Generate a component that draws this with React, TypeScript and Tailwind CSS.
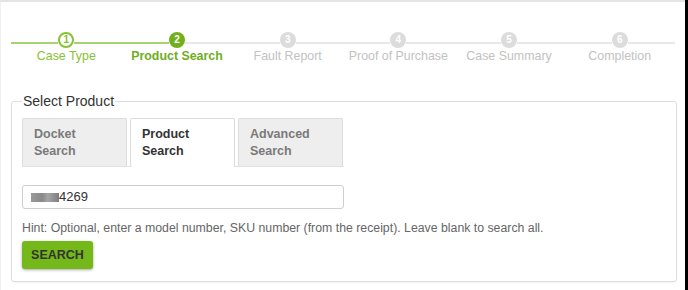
import React from 'react';

const steps = ['Case Type', 'Product Search', 'Fault Report', 'Proof of Purchase', 'Case Summary', 'Completion'];

const Stepper = () => {
  const current = 1;
  return (
    <div className="flex px-[10px] pt-[30px]">
      {steps.map((label, i) => {
        const done = i < current;
        const active = i === current;
        const leftGreen = i <= current;
        const rightGreen = i < current;
        return (
          <div key={label} className="flex-1 flex flex-col items-center">
            <div className="flex items-start w-full">
              <div className={`flex-1 mt-[10px] h-[2px] ${leftGreen ? 'bg-[#a6d46c]' : 'bg-[#e8e8e8]'}`} />
              {done ? (
                <div className="w-4 h-4 rounded-full border-2 border-[#86c232] bg-white flex items-center justify-center text-[10px] font-bold text-[#86c232] leading-none">
                  {i + 1}
                </div>
              ) : active ? (
                <div className="w-4 h-4 rounded-full bg-[#72b01b] flex items-center justify-center text-[10px] font-bold text-white leading-none">
                  {i + 1}
                </div>
              ) : (
                <div className="w-4 h-4 rounded-full bg-[#dcdcdc] flex items-center justify-center text-[10px] font-bold text-white leading-none">
                  {i + 1}
                </div>
              )}
              <div className={`flex-1 mt-[10px] h-[2px] ${rightGreen ? 'bg-[#a6d46c]' : 'bg-[#e8e8e8]'}`} />
            </div>
            <div
              className={`mt-[1px] text-[12.4px] leading-[14px] ${
                active ? 'font-bold text-[#6fae1c]' : done ? 'text-[#86c232]' : 'text-[#c2c2c2]'
              }`}
            >
              {label}
            </div>
          </div>
        );
      })}
    </div>
  );
};

const tabs = [
  ['Docket', 'Search'],
  ['Product', 'Search'],
  ['Advanced', 'Search'],
];

const App = () => {
  return (
    <div className="w-[688px] h-[290px] flex bg-white overflow-hidden" style={{ fontFamily: '"Liberation Sans", Arial, sans-serif' }}>
      <div className="flex-1 border-t-2 border-[#e4e4e4] border-l border-l-[#f0f0f0]">
        <Stepper />

        <fieldset className="mt-[30px] ml-[10px] mr-[8px] border border-[#dcdcdc] rounded-[3px] px-[10px] pb-[12px] shadow-[0_1px_1px_rgba(0,0,0,0.04)]">
          <legend className="px-[1px] text-[14px] leading-[16px] text-[#333]">Select Product</legend>

          <div className="mt-[9px] flex gap-[3px] w-[322px] border-b border-[#e2e2e2]">
            {tabs.map(([a, b], i) => (
              <div
                key={a}
                className={`w-[105px] h-[48px] px-[11px] pt-[7px] rounded-t-[2px] border border-b-0 text-[12.5px] leading-[17px] font-bold ${
                  i === 1 ? 'bg-white border-[#dcdcdc] text-[#333] -mb-px h-[49px]' : 'bg-[#eeeeee] border-[#dcdcdc] text-[#7a7a7a]'
                }`}
              >
                <div>{a}</div>
                <div>{b}</div>
              </div>
            ))}
          </div>

          <div className="mt-[18px] w-[322px] h-[24px] border border-[#cfcfcf] rounded-[3px] flex items-center pl-[8px] text-[13px] text-[#333]">
            <span className="inline-block w-[28px] h-[9px] bg-[linear-gradient(90deg,#9a9a9a,#8a8a8a_40%,#a5a5a5_60%,#7e7e7e)]" />
            <span>4269</span>
          </div>

          <p className="mt-[12px] text-[12.3px] leading-[15px] text-[#666]">
            Hint: Optional, enter a model number, SKU number (from the receipt). Leave blank to search all.
          </p>

          <button className="mt-[5px] w-[71px] h-[28px] rounded-[3px] bg-[#74b81a] text-[12.5px] font-bold text-[#333] shadow-[0_1px_3px_rgba(0,0,0,0.35)]">
            SEARCH
          </button>
        </fieldset>
      </div>
      <div className="w-[3px] h-full bg-black" />
    </div>
  );
};

export default App;
